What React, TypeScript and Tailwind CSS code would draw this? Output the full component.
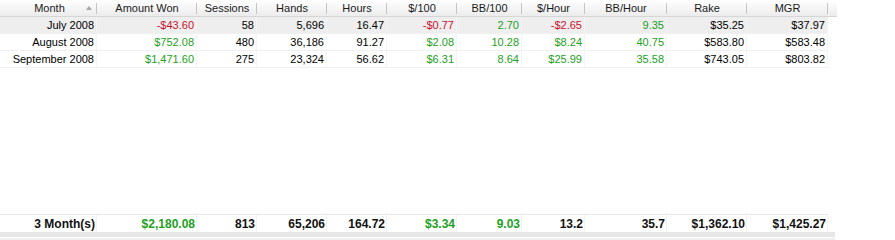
import React from "react";

const cols = [
  { name: "Month", w: 97 },
  { name: "Amount Won", w: 100 },
  { name: "Sessions", w: 60 },
  { name: "Hands", w: 70 },
  { name: "Hours", w: 60 },
  { name: "$/100", w: 70 },
  { name: "BB/100", w: 65 },
  { name: "$/Hour", w: 63 },
  { name: "BB/Hour", w: 82 },
  { name: "Rake", w: 80 },
  { name: "MGR", w: 81 },
];

type Cell = { t: string; c?: "r" | "g" };

const rows: Cell[][] = [
  [
    { t: "July 2008" },
    { t: "-$43.60", c: "r" },
    { t: "58" },
    { t: "5,696" },
    { t: "16.47" },
    { t: "-$0.77", c: "r" },
    { t: "2.70", c: "g" },
    { t: "-$2.65", c: "r" },
    { t: "9.35", c: "g" },
    { t: "$35.25" },
    { t: "$37.97" },
  ],
  [
    { t: "August 2008" },
    { t: "$752.08", c: "g" },
    { t: "480" },
    { t: "36,186" },
    { t: "91.27" },
    { t: "$2.08", c: "g" },
    { t: "10.28", c: "g" },
    { t: "$8.24", c: "g" },
    { t: "40.75", c: "g" },
    { t: "$583.80" },
    { t: "$583.48" },
  ],
  [
    { t: "September 2008" },
    { t: "$1,471.60", c: "g" },
    { t: "275" },
    { t: "23,324" },
    { t: "56.62" },
    { t: "$6.31", c: "g" },
    { t: "8.64", c: "g" },
    { t: "$25.99", c: "g" },
    { t: "35.58", c: "g" },
    { t: "$743.05" },
    { t: "$803.82" },
  ],
];

const total: Cell[] = [
  { t: "3 Month(s)" },
  { t: "$2,180.08", c: "g" },
  { t: "813" },
  { t: "65,206" },
  { t: "164.72" },
  { t: "$3.34", c: "g" },
  { t: "9.03", c: "g" },
  { t: "13.2" },
  { t: "35.7" },
  { t: "$1,362.10" },
  { t: "$1,425.27" },
];

function color(c?: "r" | "g") {
  if (c === "r") return "text-[#c8102e]";
  if (c === "g") return "text-[#22a022]";
  return "text-[#000000]";
}

export default function App() {
  return (
    <div
      className="w-[895px] h-[240px] bg-white flex flex-col overflow-hidden"
      style={{ fontFamily: '"Liberation Sans", Arial, sans-serif' }}
    >
      {/* header */}
      <div className="flex h-[17px] w-[837px] bg-gradient-to-b from-[#ffffff] to-[#ececec] border-b border-[#d6d6d6]">
        {cols.map((col, i) => (
          <div
            key={col.name}
            className="relative flex items-center justify-center text-[11px] text-[#1a1a1a]"
            style={{ width: col.w }}
          >
            <span className={i === 0 ? "pl-[2px]" : ""}>{col.name}</span>
            {i === 0 && (
              <span className="absolute right-[5px] top-[6px] w-0 h-0 border-l-[3px] border-r-[3px] border-b-[4px] border-l-transparent border-r-transparent border-b-[#a8a8a8]" />
            )}
            <span className="absolute right-0 top-[3px] h-[11px] w-px bg-[#c4c4c4]" />
          </div>
        ))}
        <div className="flex-1" />
      </div>
      {rows.map((r, ri) => (
        <div
          key={ri}
          className={`flex h-[17px] w-[828px] border-b border-[#f0f0f0] ${ri === 0 ? "bg-[#eeeeee]" : "bg-white"}`}
        >
          {r.map((cell, ci) => (
            <div
              key={ci}
              className={`flex items-center justify-end pr-[2px] text-[11px] border-r border-[#f4f4f4] ${color(cell.c)}`}
              style={{ width: cols[ci].w }}
            >
              {cell.t}
            </div>
          ))}
        </div>
      ))}
      <div className="flex-1" />
      {/* total row */}
      <div className="flex h-[18px] w-[828px] border-t border-[#e8e8e8] bg-white">
        {total.map((cell, ci) => (
          <div
            key={ci}
            className={`flex items-center justify-end pr-[1px] text-[12px] font-bold border-r border-[#f2f2f2] ${cell.c === "g" ? "text-[#22a022]" : "text-[#111111]"}`}
            style={{ width: cols[ci].w }}
          >
            {cell.t}
          </div>
        ))}
      </div>
      <div className="h-[5px] w-[835px] bg-[#e6e6e6]" />
      <div className="h-[1px] w-[835px] bg-white" />
      <div className="h-[2px] w-[835px] bg-[#efefef]" />
    </div>
  );
}
